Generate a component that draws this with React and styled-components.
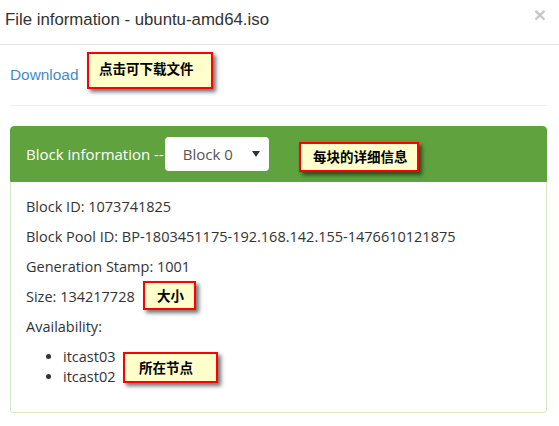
import React from "react";
import styled, { createGlobalStyle } from "styled-components";

const GlobalStyle = createGlobalStyle`
  body {
    margin: 0;
    background: #fff;
  }
`;

const replicas = ["itcast03", "itcast02"];

const App = () => {
  return (
    <>
      <GlobalStyle />
      <Page>
        <Header>
          <Title>File information - ubuntu-amd64.iso</Title>
          <Close>×</Close>
        </Header>
        <Body>
          <DownloadRow>
            <DownloadLink href="#">Download</DownloadLink>
          </DownloadRow>
          <Panel>
            <PanelHeading>
              <PanelTitle>Block information --</PanelTitle>
              <SelectBox>
                <span>Block 0</span>
                <svg width="8" height="6" viewBox="0 0 8 6">
                  <path d="M0 0 L8 0 L4 6 Z" fill="#333" />
                </svg>
              </SelectBox>
            </PanelHeading>
            <PanelBody>
              <Line>Block ID: 1073741825</Line>
              <Line>Block Pool ID: BP-1803451175-192.168.142.155-1476610121875</Line>
              <Line>Generation Stamp: 1001</Line>
              <Line>Size: 134217728</Line>
              <Line>Availability:</Line>
              <List>
                {replicas.map((name) => (
                  <li key={name}>{name}</li>
                ))}
              </List>
            </PanelBody>
          </Panel>
        </Body>

        <Callout $left={87} $top={52} $width={126} $height={37} $pad={10} $lift={6}>
          点击可下载文件
        </Callout>
        <Callout $left={299} $top={142} $width={120} $height={30} $pad={12}>
          每块的详细信息
        </Callout>
        <Callout $left={143} $top={281} $width={53} $height={29} $pad={12}>
          大小
        </Callout>
        <Callout $left={123} $top={352} $width={95} $height={31} $pad={14}>
          所在节点
        </Callout>
      </Page>
    </>
  );
};

export default App;

const Page = styled.div`
  position: relative;
  width: 559px;
  height: 426px;
  overflow: hidden;
  background: #fff;
`;

const Header = styled.div`
  height: 45px;
  box-sizing: border-box;
  border-bottom: 1px solid #e5e5e5;
  display: flex;
  justify-content: space-between;
  align-items: flex-start;
  padding: 8px 13px 0 5px;
`;

const Title = styled.h4`
  margin: 0;
  font-family: "Liberation Sans", Arial, sans-serif;
  font-weight: normal;
  font-size: 16.8px;
  line-height: 24px;
  color: #333;
`;

const Close = styled.span`
  font-family: "Liberation Sans", Arial, sans-serif;
  font-size: 21px;
  font-weight: bold;
  line-height: 14px;
  color: #c8c8c8;
`;

const Body = styled.div`
  padding: 0 12px 0 10px;
`;

const DownloadRow = styled.div`
  padding: 20px 0 20px;
  border-bottom: 1px solid #eee;
`;

const DownloadLink = styled.a`
  display: block;
  font-family: "Liberation Sans", Arial, sans-serif;
  font-size: 15.4px;
  line-height: 20px;
  color: #428bca;
  text-decoration: none;
`;

const Panel = styled.div`
  margin-top: 20px;
  font-family: "Open Sans", "Noto Sans", sans-serif;
`;

const PanelHeading = styled.div`
  display: flex;
  align-items: center;
  gap: 1px;
  padding: 10px 15px;
  background: #5fa23e;
  border: 1px solid #5fa23e;
  border-radius: 4px 4px 0 0;
`;

const PanelTitle = styled.span`
  color: #fff;
  font-size: 15px;
  line-height: 20px;
`;

const SelectBox = styled.div`
  box-sizing: border-box;
  width: 104px;
  height: 34px;
  display: flex;
  align-items: center;
  justify-content: space-between;
  padding: 0 9px 0 18px;
  background: #fff;
  border-radius: 4px;
  font-size: 15px;
  color: #555;
`;

const PanelBody = styled.div`
  padding: 15px;
  border: 1px solid #d6e9c6;
  border-top: none;
  border-radius: 0 0 4px 4px;
  color: #333;
`;

const Line = styled.p`
  margin: 0 0 10px;
  font-size: 14.5px;
  line-height: 20px;
`;

const List = styled.ul`
  margin: 0 0 10px;
  padding-left: 37px;
  font-size: 14.5px;
  line-height: 20px;
`;

const Callout = styled.div`
  position: absolute;
  left: ${(p) => p.$left}px;
  top: ${(p) => p.$top}px;
  width: ${(p) => p.$width}px;
  height: ${(p) => p.$height}px;
  box-sizing: border-box;
  border: 2px solid #f00;
  background: #ffffcc;
  box-shadow: 3px 3px 4px rgba(0, 0, 0, 0.55);
  display: flex;
  align-items: center;
  padding: 0 0 ${(p) => p.$lift || 2}px ${(p) => p.$pad}px;
  font-family: "Noto Sans CJK SC", sans-serif;
  font-weight: bold;
  font-size: 13.5px;
  color: #000;
`;
